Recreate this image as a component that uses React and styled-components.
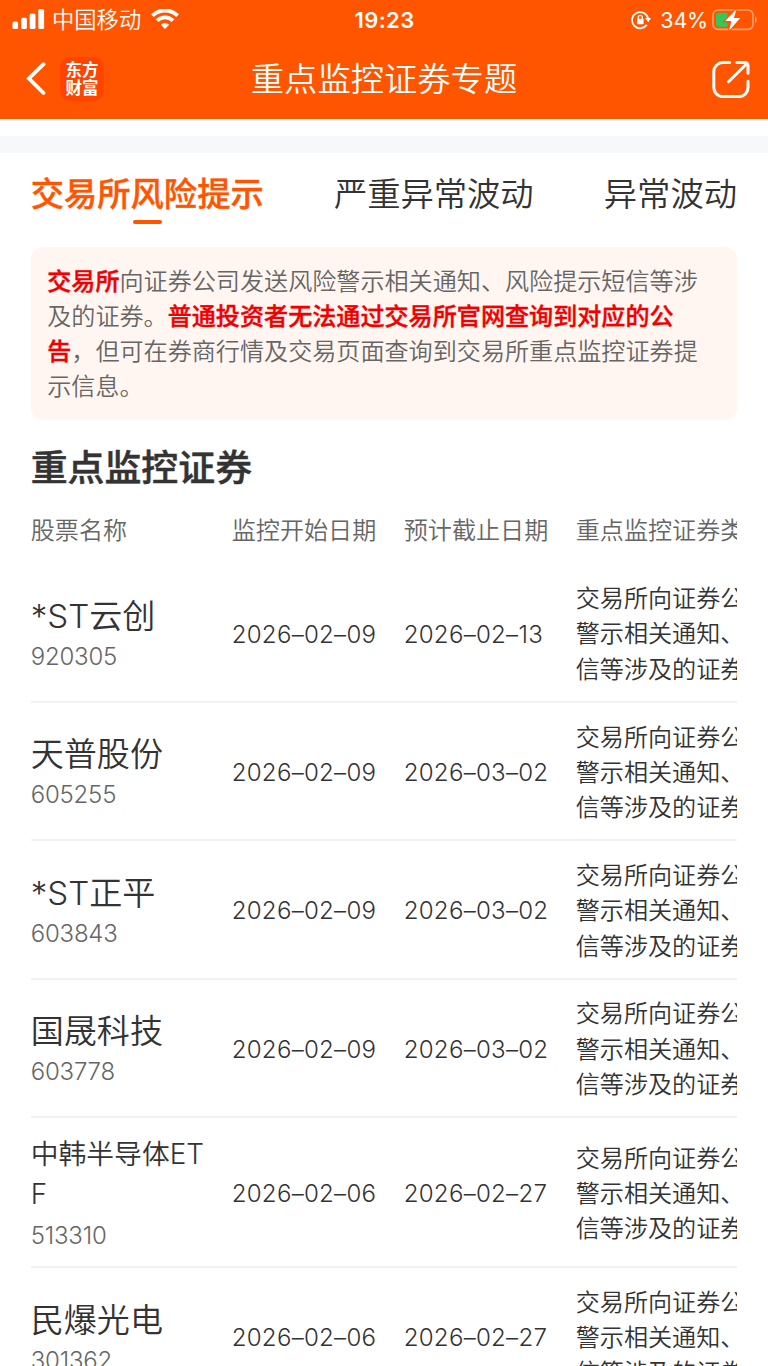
import React, { useState } from 'react';
import styled, { createGlobalStyle } from 'styled-components';

const GlobalStyle = createGlobalStyle`
  * {
    box-sizing: border-box;
  }

  body {
    margin: 0;
    background: #fff;
    font-family: Inter, "Noto Sans CJK SC", sans-serif;
    font-weight: 350;
    color: #333;
  }

  h1, h2, p {
    margin: 0;
    font-weight: 350;
  }
`;

const Page = styled.div`
  width: 768px;
  height: 1366px;
  overflow: hidden;
  background: #fff;
`;

const Header = styled.header`
  height: 119px;
  background: #ff5500;
  color: #fff;
`;

const StatusBar = styled.div`
  display: grid;
  grid-template-columns: 1fr auto 1fr;
  align-items: center;
  height: 39px;
  padding: 0 11px 0 12px;

  svg {
    display: block;
  }
`;

const StatusSide = styled.div`
  display: flex;
  align-items: center;
  justify-content: ${({ $end }) => ($end ? 'flex-end' : 'flex-start')};
`;

const Carrier = styled.span`
  margin: 0 10px 0 7px;
  font-size: 22.3px;
  line-height: 38px;
`;

const Time = styled.span`
  font-size: 22px;
  font-weight: 600;
  letter-spacing: 0.4px;
`;

const Percent = styled.span`
  margin: 0 4px 0 9px;
  font-size: 21.5px;
  font-weight: 400;
  letter-spacing: -0.2px;
`;

const NavBar = styled.div`
  display: grid;
  grid-template-columns: 1fr auto 1fr;
  align-items: center;
  height: 80px;
  padding: 0 18px 0 26px;

  h1 {
    margin-left: -8px;
    font-size: 33.3px;
    line-height: 48px;
    padding-bottom: 1px;
  }
`;

const NavSide = styled.div`
  display: flex;
  align-items: center;
  gap: 14px;
  justify-content: ${({ $end }) => ($end ? 'flex-end' : 'flex-start')};

  svg {
    display: block;
  }
`;

const Logo = styled.div`
  display: grid;
  place-content: center;
  width: 44px;
  height: 44px;
  border-radius: 10px;
  background: #ff4400;
  font-size: 16.5px;
  font-weight: 700;
  line-height: 18px;
`;

const Divider = styled.div`
  height: 17px;
  margin-top: 17px;
  background: #f7f8fa;
`;

const Content = styled.main`
  padding: 0 31px 0 30.7px;
`;

const Tabs = styled.nav`
  display: flex;
  justify-content: space-between;
  height: 93.5px;
  padding-top: 17px;
`;

const Tab = styled.div`
  display: flex;
  flex-direction: column;
  align-items: center;
  font-size: 33.3px;
  line-height: 48px;
  font-weight: ${({ $active }) => ($active ? 500 : 350)};
  -webkit-text-stroke: ${({ $active }) => ($active ? '0.4px' : '0')};
  color: ${({ $active }) => ($active ? '#ff5500' : '#333')};
  cursor: pointer;

  &::after {
    content: '';
    width: 29px;
    height: 4px;
    margin-top: 2px;
    border-radius: 2px;
    background: ${({ $active }) => ($active ? '#ff5500' : 'transparent')};
  }
`;

const Notice = styled.p`
  height: 173.5px;
  padding: 17px 16.5px;
  border-radius: 12px;
  background: #fff6f1;
  color: #666;
  font-size: 24.1px;
  line-height: 35.2px;

  strong {
    color: #f00000;
    font-weight: 500;
    -webkit-text-stroke: 0.4px;
  }
`;

const SectionTitle = styled.h2`
  margin: 21px 0 -1px;
  font-size: 36.9px;
  font-weight: 500;
  line-height: 54px;
  -webkit-text-stroke: 0.5px;
`;

const Table = styled.div`
  overflow: hidden;
`;

const Row = styled.div`
  display: grid;
  grid-template-columns: 201px 172px 172px 300px;
  align-items: center;
  width: 845px;
  height: ${({ $tall }) => ($tall ? 150 : 138.4)}px;
  padding-top: 3px;
  border-bottom: 2px solid #f2f2f2;
  font-size: 24.1px;
`;

const HeadRow = styled(Row)`
  height: 70.4px;
  border: 0;
  color: #666;
  padding: 0 0 1px;
`;

const Stock = styled.div`
  padding-bottom: ${({ $small }) => ($small ? 0 : 2)}px;
`;

const StockName = styled.div`
  width: 176px;
  font-size: ${({ $small }) => ($small ? 27.8 : 33.1)}px;
  line-height: ${({ $small }) => ($small ? 40 : 48)}px;
  margin-bottom: ${({ $small }) => ($small ? 4.5 : 0)}px;
  word-break: break-all;
`;

const StockCode = styled.div`
  color: #666;
  font-size: 24px;
  line-height: 34px;
  letter-spacing: -0.2px;
`;

const DateCell = styled.div`
  letter-spacing: 0.25px;
`;

const Reason = styled.div`
  line-height: 35.3px;
`;

const stocks = [
  { name: '*ST云创', code: '920305', start: '2026–02–09', end: '2026–02–13' },
  { name: '天普股份', code: '605255', start: '2026–02–09', end: '2026–03–02' },
  { name: '*ST正平', code: '603843', start: '2026–02–09', end: '2026–03–02' },
  { name: '国晟科技', code: '603778', start: '2026–02–09', end: '2026–03–02' },
  { name: '中韩半导体ETF', code: '513310', start: '2026–02–06', end: '2026–02–27' },
  { name: '民爆光电', code: '301362', start: '2026–02–06', end: '2026–02–27' },
];

const tabs = ['交易所风险提示', '严重异常波动', '异常波动'];

const SignalIcon = () => (
  <svg width="33" height="21" viewBox="0 0 33 21" fill="#fff">
    <rect x="0.5" y="12.5" width="5.6" height="7.5" rx="1.6" />
    <rect x="9.1" y="8.8" width="5.8" height="11.2" rx="1.6" />
    <rect x="17.7" y="4.5" width="5.8" height="15.5" rx="1.6" />
    <rect x="26.3" y="0" width="5.8" height="20" rx="1.6" />
  </svg>
);

const WifiIcon = () => (
  <svg width="28" height="21" viewBox="0 0 28 21" fill="none" stroke="#fff">
    <path d="M1.4 6.6a18 18 0 0 1 25.2 0" strokeWidth="4" />
    <path d="M6 11.7a11.4 11.4 0 0 1 16 0" strokeWidth="3.8" />
    <path d="M14 20l-4.1-4.2a5.8 5.8 0 0 1 8.2 0z" fill="#fff" stroke="none" />
  </svg>
);

const RotationLockIcon = () => (
  <svg width="20" height="20" viewBox="0 0 20 20" fill="none" stroke="#fff" strokeWidth="1.8">
    <path d="M15.8 14.8A8.1 8.1 0 1 1 17 8.2" />
    <path d="M14.2 8h5.8l-2.8 4.2z" fill="#fff" stroke="none" />
    <rect x="6" y="8.8" width="6.6" height="5.4" rx="0.8" fill="#fff" stroke="none" />
    <path d="M7.3 9.2V7.3a2 2 0 0 1 4 0v1.9" strokeWidth="1.3" />
  </svg>
);

const BatteryIcon = () => (
  <svg width="45" height="24" viewBox="0 0 45 24">
    <rect x="1" y="2" width="40" height="19.4" rx="5" fill="none" stroke="#fff" strokeOpacity="0.45" strokeWidth="1.6" />
    <path d="M43 8.3a4 4 0 0 1 0 6.8z" fill="#fff" fillOpacity="0.5" />
    <path d="M6.5 4.8H15.5V18.8H6.5a2.5 2.5 0 0 1-2.5-2.5V7.3a2.5 2.5 0 0 1 2.5-2.5z" fill="#34c759" />
    <path
      d="M24.8 0.8L13.2 13.1h6.2L17.2 22.4 28.3 9.9h-6.5z"
      fill="#fff"
      stroke="#ff5500"
      strokeWidth="2.4"
      paintOrder="stroke"
    />
  </svg>
);

const BackIcon = () => (
  <svg width="20" height="34" viewBox="0 0 20 34" fill="none" stroke="#fff" strokeWidth="3.8" strokeLinecap="round">
    <path d="M17.5 2.2L3 16.5L17.5 31" />
  </svg>
);

const ShareIcon = () => (
  <svg width="38" height="38" viewBox="0 0 38 38" fill="none" stroke="#fff" strokeWidth="3" strokeLinecap="round">
    <path d="M17.7 2.6H10.8a9 9 0 0 0-9 9V27.6a9 9 0 0 0 9 9H27a9 9 0 0 0 9-9V21.2" />
    <path d="M24.8 2.6H33.2a2.8 2.8 0 0 1 2.8 2.8V13.2" />
    <path d="M16.5 21.7L34.5 4" />
  </svg>
);

function StockRow({ stock }) {
  const long = stock.name.length > 5;
  return (
    <Row $tall={long}>
      <Stock $small={long}>
        <StockName $small={long}>{stock.name}</StockName>
        <StockCode>{stock.code}</StockCode>
      </Stock>
      <DateCell>{stock.start}</DateCell>
      <DateCell>{stock.end}</DateCell>
      <Reason>
        交易所向证券公司发送风险
        <br />
        警示相关通知、风险提示短
        <br />
        信等涉及的证券
      </Reason>
    </Row>
  );
}

function App() {
  const [active, setActive] = useState(0);
  return (
    <Page>
      <GlobalStyle />
      <Header>
        <StatusBar>
          <StatusSide>
            <SignalIcon />
            <Carrier>中国移动</Carrier>
            <WifiIcon />
          </StatusSide>
          <Time>19:23</Time>
          <StatusSide $end>
            <RotationLockIcon />
            <Percent>34%</Percent>
            <BatteryIcon />
          </StatusSide>
        </StatusBar>
        <NavBar>
          <NavSide>
            <BackIcon />
            <Logo>
              <span>东方</span>
              <span>财富</span>
            </Logo>
          </NavSide>
          <h1>重点监控证券专题</h1>
          <NavSide $end>
            <ShareIcon />
          </NavSide>
        </NavBar>
      </Header>
      <Divider />
      <Content>
        <Tabs>
          {tabs.map((tab, i) => (
            <Tab key={tab} $active={i === active} onClick={() => setActive(i)}>
              {tab}
            </Tab>
          ))}
        </Tabs>
        <Notice>
          <strong>交易所</strong>
          向证券公司发送风险警示相关通知、风险提示短信等涉及的证券。
          <strong>普通投资者无法通过交易所官网查询到对应的公告</strong>
          ，但可在券商行情及交易页面查询到交易所重点监控证券提示信息。
        </Notice>
        <SectionTitle>重点监控证券</SectionTitle>
        <Table>
          <HeadRow>
            <div>股票名称</div>
            <div>监控开始日期</div>
            <div>预计截止日期</div>
            <div>重点监控证券类型</div>
          </HeadRow>
          {stocks.map((stock) => (
            <StockRow key={stock.code} stock={stock} />
          ))}
        </Table>
      </Content>
    </Page>
  );
}

export default App;
